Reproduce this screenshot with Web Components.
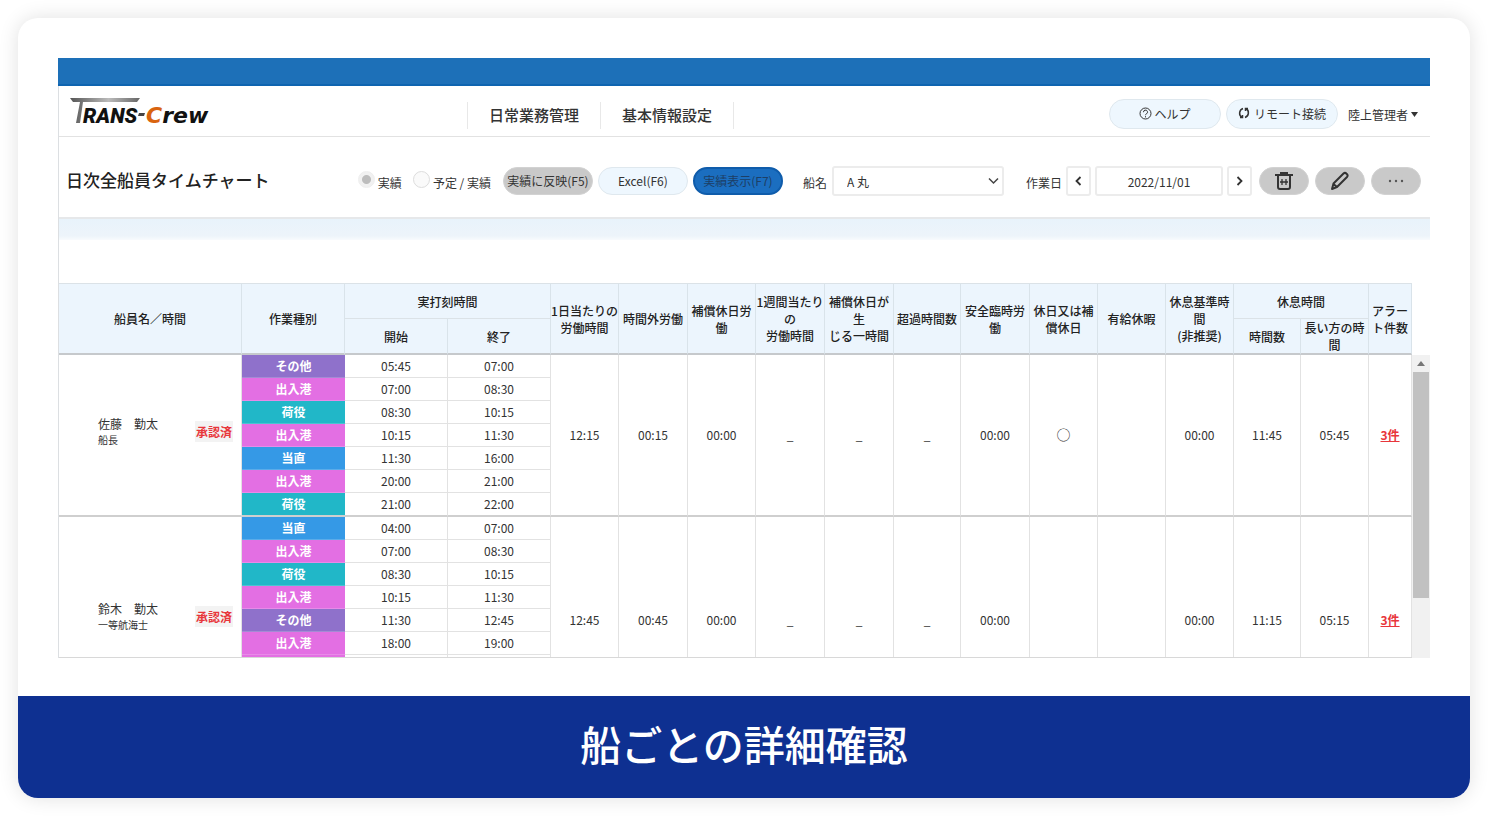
<!DOCTYPE html>
<html lang="ja">
<head>
<meta charset="utf-8">
<meta name="viewport" content="width=device-width, initial-scale=1">
<title>TRANS-Crew 日次全船員タイムチャート</title>
<style>
  body {
    margin: 0;
    padding: 18px;
    background: #fff;
    color: #333;
    font: 400 12px/17px "Noto Sans CJK JP", "Noto Sans", sans-serif;
  }
</style>
</head>
<body>
<feature-card>
  <crew-screen>
    <app-header></app-header>
    <chart-toolbar></chart-toolbar>
    <time-chart></time-chart>
  </crew-screen>
  <span slot="caption">船ごとの詳細確認</span>
</feature-card>

<script>
const define = (name, html, setup) => {
  const tpl = document.createElement('template');
  tpl.innerHTML = html;
  customElements.define(name, class extends HTMLElement {
    constructor() {
      super();
      this.attachShadow({ mode: 'open' }).append(tpl.content.cloneNode(true));
      if (setup) setup(this.shadowRoot, this);
    }
  });
};

/* Rounded card with a caption strip */
define('feature-card', `
<style>
  :host { display: block; border-radius: 20px; overflow: hidden; background: #fff; box-shadow: 0 0 20px rgba(0,0,0,.12); }
  .body { padding: 40px 40px 38px; }
  h2 { margin: 0; padding: 16px 20px 24px; background: #0e3091; color: #fff; text-align: center; font-size: 41px; line-height: 62px; font-weight: 500; }
</style>
<div class="body"><slot></slot></div>
<h2><slot name="caption"></slot></h2>`);

/* Application window */
define('crew-screen', `
<style>
  :host { display: block; }
  .bar { height: 26px; background: #1d70b8; border-bottom: 2px solid #0e64b0; }
  .content { border-left: 1px solid #dcdfe2; }
</style>
<div class="bar"></div>
<div class="content"><slot></slot></div>`);

/* Pill-shaped button; tone: light, gray, blue */
define('pill-button', `
<style>
  :host { display: block; width: 90px; height: 28px; }
  button { box-sizing: border-box; width: 100%; height: 100%; padding: 0 0 2px; border: 1px solid #dfe8ee; border-radius: 15px;
    display: flex; align-items: center; justify-content: center; gap: 2px; white-space: nowrap;
    background: #eef7fe; color: #333; font: inherit; }
  :host([label]) button { padding: 0; }
  :host([tone="gray"]) button { background: #c9c9c9; border-color: #d2d2d2; }
  :host([tone="blue"]) button { background: #1b6ec0; border: 2px solid #0f5cab; color: #1d3f66; }
</style>
<button type="button"><slot></slot></button>`, (root, host) => {
  const label = host.getAttribute('label');
  if (label) root.querySelector('button').setAttribute('aria-label', label);
});

define('crew-logo', `
<style>
  :host { display: block; }
  svg { display: block; overflow: visible; }
</style>
<svg width="150" height="40" viewBox="0 0 150 40" role="img" aria-label="TRANS-Crew">
  <defs>
    <linearGradient id="g" x1="0" x2="1" y1="0" y2="0"><stop offset="0" stop-color="#555"/><stop offset=".55" stop-color="#bbb"/><stop offset="1" stop-color="#666"/></linearGradient>
  </defs>
  <path d="M0 7H70L67 11H13L10 32H6L10 11H3Z" fill="url(#g)"/>
  <text x="13" y="32" font-family="Roboto, sans-serif" font-weight="900" font-style="italic" font-size="21" fill="#111">RANS</text>
  <path d="M69 22H75L74 25H68Z" fill="#444"/>
  <text x="76" y="32" font-family="DejaVu Sans, sans-serif" font-weight="700" font-style="italic" font-size="22"><tspan fill="#d9640f">C</tspan><tspan fill="#111">rew</tspan></text>
</svg>`);

define('app-header', `
<style>
  :host { display: grid; grid-template-columns: minmax(160px, 397px) 1fr auto; align-items: center;
    height: 50px; padding: 0 12px 0 11px; border-bottom: 1px solid #e2e2e2; }
  nav { display: flex; margin-top: 8px; height: 27px; border-left: 1px solid #e8e8e8; justify-self: start; }
  nav a { padding: 0 20px; border-right: 1px solid #e8e8e8; color: #333; text-decoration: none;
    font-size: 15px; line-height: 25px; font-weight: 500; width: 92px; text-align: center; white-space: nowrap; }
  .right { display: flex; align-items: center; gap: 5px; margin-top: 6px; }
  .right pill-button { width: 112px; height: 30px; }
  .user { display: flex; align-items: center; gap: 3px; margin-left: 5px; padding: 0; border: 0; background: none; color: #333; font: inherit; }
</style>
<crew-logo></crew-logo>
<nav><a href="#daily">日常業務管理</a><a href="#basic">基本情報設定</a></nav>
<div class="right">
  <pill-button><svg width="13" height="13" viewBox="0 0 13 13" fill="none" stroke="#333"><circle cx="6.500" cy="6.500" r="5.500"/><path d="M4.500 5.200a2 2 0 1 1 3 1.600Q6.500 7.300 6.500 8.200M6.500 9.200v1.200"/></svg>ヘルプ</pill-button>
  <pill-button><svg width="14" height="12" viewBox="0 0 14 12" fill="none" stroke="#333" stroke-width="1.500"><path d="M5 1.500A5 5 0 0 0 4 10.500M2 10.500h2.500V8M7 10.500A5 5 0 0 0 8 1.500M10 1.500H7.500V4"/></svg>リモート接続</pill-button>
  <button type="button" class="user">陸上管理者<svg width="7" height="5" viewBox="0 0 7 5"><path d="M0 0H7L3.500 5Z" fill="#333"/></svg></button>
</div>`);

define('chart-toolbar', `
<style>
  :host { display: block; padding-bottom: 43px; }
  form { display: flex; align-items: center; height: 72px; margin: 0; padding: 8px 9px 0 7px; border-bottom: 2px solid #e6e8ea; }
  .band { height: 21px; background: linear-gradient(#e8f3fb, #edf4fa 80%, #f8fbfd); }
  h1 { flex: 1; margin: 0; padding-bottom: 2px; font-size: 17px; line-height: 24px; font-weight: 500; color: #222; white-space: nowrap; }
  .group { display: flex; align-items: center; gap: 5px; }
  label { padding-top: 3px; white-space: nowrap; }
  input[type=radio] { appearance: none; margin: 0 3px 4px 0; width: 17px; height: 17px; border: 1px solid #ddd; border-radius: 50%; background: #fafafa; }
  input[type=radio]:checked { background: radial-gradient(circle, #bdbdbd 4px, #f1f1f1 5px); border-color: #eee; }
  .radios { gap: 0; margin-right: 12px; }
  .radios label:first-of-type { margin-right: 11px; }
  .ship { margin: 0 22px 0 20px; }
  .date { gap: 4px; margin-right: 7px; }
  .tools { gap: 6px; }
  .tools pill-button { width: 50px; }
  .field { box-sizing: border-box; height: 30px; border: 2px solid #ececec; border-radius: 3px; background: #fff; color: #333; font: inherit; }
  select.field { appearance: none; width: 172px; padding: 0 13px; }
  .select { display: grid; align-items: center; }
  .select > * { grid-area: 1 / 1; }
  .select svg { justify-self: end; margin-right: 5px; pointer-events: none; }
  input.field { width: 128px; padding: 0; text-align: center; }
  .step { width: 25px; padding: 0; display: flex; align-items: center; justify-content: center; }
</style>
<form>
  <h1>日次全船員タイムチャート</h1>
  <div class="group radios">
    <input type="radio" name="mode" id="r1" checked><label for="r1">実績</label>
    <input type="radio" name="mode" id="r2"><label for="r2">予定 / 実績</label>
  </div>
  <div class="group">
    <pill-button tone="gray">実績に反映(F5)</pill-button>
    <pill-button>Excel(F6)</pill-button>
    <pill-button tone="blue">実績表示(F7)</pill-button>
  </div>
  <div class="group ship">
    <label for="ship">船名</label>
    <div class="select"><select id="ship" class="field"><option>A 丸</option></select>
      <svg width="11" height="8" viewBox="0 0 11 8" fill="none" stroke="#444" stroke-width="1.500"><path d="M1 1.500L5.500 6L10 1.500"/></svg></div>
  </div>
  <div class="group date">
    <label for="day">作業日</label>
    <button type="button" class="field step" aria-label="前日"><svg width="7" height="10" viewBox="0 0 7 10" fill="none" stroke="#333" stroke-width="1.800"><path d="M5.500 1L1.500 5L5.500 9"/></svg></button>
    <input type="text" id="day" class="field" value="2022/11/01">
    <button type="button" class="field step" aria-label="翌日"><svg width="7" height="10" viewBox="0 0 7 10" fill="none" stroke="#333" stroke-width="1.800"><path d="M1.500 1L5.500 5L1.500 9"/></svg></button>
  </div>
  <div class="group tools">
    <pill-button tone="gray" label="削除"><svg width="18" height="20" viewBox="0 0 18 20" fill="none" stroke="#333" stroke-width="2"><path d="M0 4H18M6 4V2H12V4M3 4V16Q3 18 5 18H13Q15 18 15 16V4"/><path d="M7 8V14M11 8V14M5 11H13" stroke-width="1.300"/></svg></pill-button>
    <pill-button tone="gray" label="編集"><svg width="20" height="20" viewBox="0 0 20 20" fill="none" stroke="#333" stroke-width="2" stroke-linejoin="round"><path d="M2 18L3.500 12.500L13.500 2.500Q15 1.200 16.600 2.700Q18.400 4.400 17 6L7 16ZM3.500 13L6.800 16"/></svg></pill-button>
    <pill-button tone="gray" label="その他"><svg width="16" height="4" viewBox="0 0 16 4" fill="#555"><circle cx="2" cy="2" r="1.200"/><circle cx="8" cy="2" r="1.200"/><circle cx="14" cy="2" r="1.200"/></svg></pill-button>
  </div>
</form>
<div class="band"></div>`);

/* Crew member name, rank and approval state */
define('crew-name', `
<style>
  :host { display: flex; align-items: center; justify-content: space-between; padding: 0 8px 6px 39px; text-align: left; }
  .rank { display: block; font-size: 10px; line-height: 15px; }
  .state { padding: 2px 1px; background: #f3f3f3; color: #e8363b; font-weight: 700; }
</style>
<div><slot></slot><span class="rank"><slot name="rank"></slot></span></div>
<span class="state">承認済</span>`);

define('scroll-rail', `
<style>
  :host { display: flex; flex-direction: column; width: 18px; flex: none; background: #f1f1f1; }
  svg { display: block; margin: 6px auto; }
  .thumb { height: 226px; margin: 0 1px; background: #c1c1c1; }
</style>
<svg width="8" height="5" viewBox="0 0 8 5"><path d="M0 5L4 0L8 5Z" fill="#777"/></svg>
<div class="thumb"></div>`);

const WIDTHS = [183,103,103,103,68,69,68,69,69,67,69,68,68,68,67,68,43];
const KINDS = { o: 'その他', p: '出入港', c: '荷役', w: '当直' };
const CREW = [
  { name: '佐藤　勤太', rank: '船長', span: 7,
    work: [['o','05:45','07:00'],['p','07:00','08:30'],['c','08:30','10:15'],['p','10:15','11:30'],['w','11:30','16:00'],['p','20:00','21:00'],['c','21:00','22:00']],
    totals: ['12:15','00:15','00:00','_','_','_','00:00','○','','00:00','11:45','05:45'] },
  { name: '鈴木　勤太', rank: '一等航海士', span: 9,
    work: [['w','04:00','07:00'],['p','07:00','08:30'],['c','08:30','10:15'],['p','10:15','11:30'],['o','11:30','12:45'],['p','18:00','19:00'],['p','',''],['c','',''],['w','','']],
    totals: ['12:45','00:45','00:00','_','_','_','00:00','','','00:00','11:15','05:15'] }
];
const merged = (span, html, cls = '') => `<td rowspan="${span}" class="m ${cls}">${html}</td>`;
const groups = CREW.map(c => '<tbody>' + c.work.map(([k, from, to], i) => '<tr>' +
  (i ? '' : merged(c.span, `<crew-name>${c.name}<span slot="rank">${c.rank}</span></crew-name>`)) +
  `<td class="k ${k}">${from && KINDS[k]}</td><td>${from}</td><td>${to}</td>` +
  (i ? '' : c.totals.map(t => merged(c.span, t, t === '○' ? 'ring' : '')).join('') + merged(c.span, '<a href="#alerts">3件</a>')) +
  '</tr>').join('') + '</tbody>').join('');

define('time-chart', `
<style>
  :host { display: flex; height: 375px; overflow: hidden; }
  .view { flex: 1; min-width: 0; overflow: hidden; box-sizing: border-box; border-bottom: 1px solid #d8d8d8; }
  scroll-rail { margin-top: 72px; }
  table { width: 100%; table-layout: fixed; border-collapse: separate; border-spacing: 0; }
  th, td { box-sizing: border-box; padding: 0; text-align: center; vertical-align: middle; border-right: 1px solid #e2e2e2; }
  th { background: #ecf5fd; border-right-color: #d9e3ea; font-weight: 500; color: #222; border-top: 1px solid #dbe2e7; }
  thead tr { height: 35px; }
  thead tr + tr { height: 37px; }
  th[rowspan], thead tr + tr th { border-bottom: 2px solid #c6c9cc; }
  tbody tr { height: 23px; }
  tbody tr:last-child { height: 24px; }
  td { height: 23px; padding-bottom: 2px; border-bottom: 1px solid #e2e2e2; }
  tbody tr:last-child td, td.m { border-bottom: 2px solid #cfcfcf; }
  td.k { color: #fff; font-weight: 700; border-right: 0; border-bottom-color: #ffffff30; }
  tbody tr:last-child td.k { border-bottom-color: #cfcfcf; }
  .o { background: #8f71cb; } .p { background: #e36fe3; } .c { background: #21b7c8; } .w { background: #3599e6; }
  .ring { font-size: 14px; }
  a { color: #e8363b; font-weight: 700; }
</style>
<div class="view">
<table>
  <colgroup>${WIDTHS.map(w => `<col style="width:${w}px">`).join('')}</colgroup>
  <thead>
    <tr>
      <th rowspan="2">船員名／時間</th><th rowspan="2">作業種別</th><th colspan="2">実打刻時間</th>
      <th rowspan="2">1日当たりの<br>労働時間</th><th rowspan="2">時間外労働</th><th rowspan="2">補償休日労働</th>
      <th rowspan="2">1週間当たりの<br>労働時間</th><th rowspan="2">補償休日が生<br>じる一時間</th><th rowspan="2">超過時間数</th>
      <th rowspan="2">安全臨時労働</th><th rowspan="2">休日又は補償休日</th><th rowspan="2">有給休暇</th>
      <th rowspan="2">休息基準時間<br>(非推奨)</th><th colspan="2">休息時間</th><th rowspan="2">アラート件数</th>
    </tr>
    <tr><th>開始</th><th>終了</th><th>時間数</th><th>長い方の時間</th></tr>
  </thead>
  ${groups}
</table>
</div>
<scroll-rail></scroll-rail>`);
</script>
</body>
</html>
